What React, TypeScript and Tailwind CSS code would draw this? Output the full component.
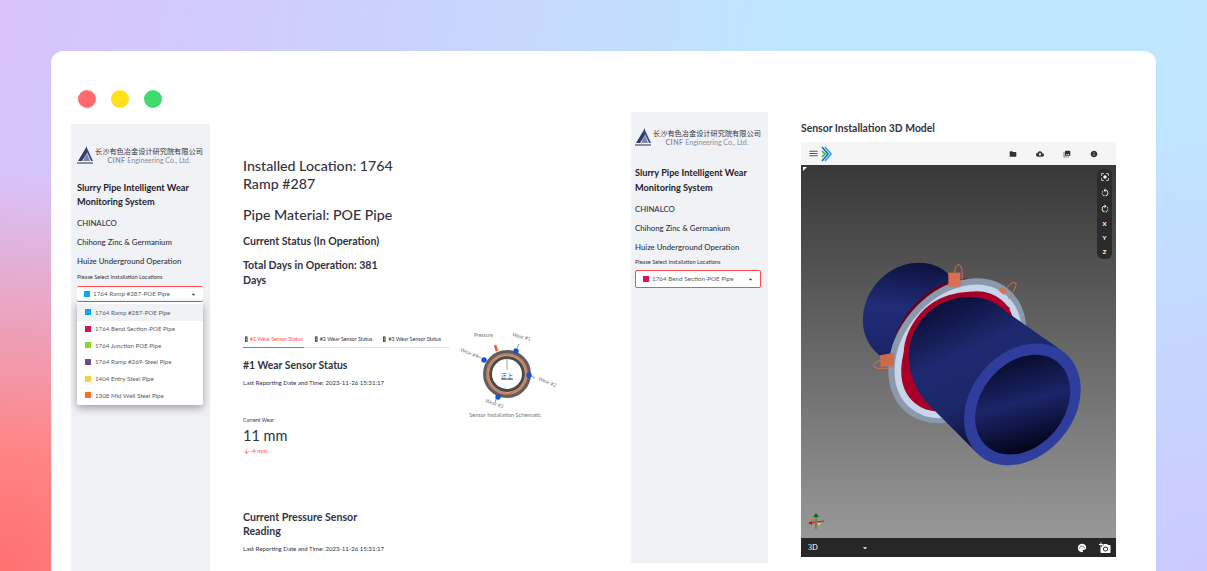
import { MdMenu, MdFolder, MdCloudUpload, MdPhotoLibrary, MdInfo, MdCenterFocusStrong, MdRotateLeft, MdRotateRight, MdPalette, MdArrowDropDown, MdAddAPhoto, MdArrowDownward } from 'react-icons/md';

const pipeOptions = [
  { label: '1764 Ramp #287-POE Pipe', swatch: 'bg-[#0ea5e9]', active: true },
  { label: '1764 Bend Section-POE Pipe', swatch: 'bg-[#d6125a]', active: false },
  { label: '1764 Junction POE Pipe', swatch: 'bg-[#84d82c]', active: false },
  { label: '1764 Ramp #269-Steel Pipe', swatch: 'bg-[#6b4a9c]', active: false },
  { label: '1404 Entry Steel Pipe', swatch: 'bg-[#f9cf45]', active: false },
  { label: '1308 Mid Well Steel Pipe', swatch: 'bg-[#fb6d25]', active: false },
];

function Logo() {
  return (
    <div className="flex items-center gap-px">
      <svg width="17" height="19" viewBox="0 0 17 19" className="shrink-0">
        <path d="M10 0 L1 15 H5 L10 7 Z" fill="#2f3b6c" />
        <path d="M10 7 L13 15 H6 Z" fill="#7c86a8" />
        <path d="M10 2 L16 15 H14 L9 4 Z" fill="#3f4c80" />
        <rect x="0" y="16" width="16" height="2" fill="#8a8fa3" />
      </svg>
      <div className="flex flex-col items-center">
        <span className="font-['Noto_Sans_CJK_SC',sans-serif] text-[7.2px] leading-[9px] text-[#33343c] whitespace-nowrap">长沙有色冶金设计研究院有限公司</span>
        <span className="text-[7px] leading-[8px] text-[#8b8d96] whitespace-nowrap"><b className="font-bold tracking-[0.5px]">CINF</b> Engineering Co., Ltd.</span>
      </div>
    </div>
  );
}

function SelectBox({ label, swatch, frame }: { label: string; swatch: string; frame: string }) {
  return (
    <div className={`flex w-[126px] items-center rounded-[2px] border-[#ff4b4b] bg-white pl-[7px] pr-[5px] ${frame}`}>
      <span className={`mr-[3px] h-[6px] w-[6px] ${swatch}`} />
      <span className="flex-1 truncate text-[6.3px] text-[#5b5d68]">{label}</span>
      <MdArrowDropDown className="h-[9px] w-[9px] text-[#444]" />
    </div>
  );
}

function SensorDiagram() {
  return (
    <svg width="110" height="100" viewBox="0 0 110 100" className="block">
      <circle cx="57" cy="50" r="22" fill="#fff" stroke="#5f5f5f" strokeWidth="4" />
      <circle cx="57" cy="50" r="19.5" fill="none" stroke="#c9825f" strokeWidth="2.6" />
      <circle cx="57" cy="50" r="16.5" fill="none" stroke="#4a4a4a" strokeWidth="3" />
      <path d="M57 30 V46" stroke="#777" strokeWidth="0.7" />
      <text x="57" y="54" textAnchor="middle" fontSize="6" fill="#444" textDecoration="underline" fontFamily="'Noto Sans CJK SC', sans-serif">正上</text>
      <path d="M47 27 L45 21" stroke="#e8622a" strokeWidth="2.5" />
      <circle cx="66" cy="27" r="2.7" fill="#1453d8" />
      <circle cx="79" cy="51" r="2.7" fill="#1453d8" />
      <circle cx="48" cy="73" r="2.7" fill="#1453d8" />
      <circle cx="34" cy="36" r="2.7" fill="#1453d8" />
      <path d="M67 24 L69 20 M81 52 L85 54 M46 75 L45 79 M31 34 L27 32" stroke="#1453d8" strokeWidth="0.6" />
      <g fontSize="5" fill="#777" fontFamily="Lato, sans-serif">
        <text x="24" y="13">Pressure</text>
        <text x="62" y="12" transform="rotate(15 62 12)">Wear #1</text>
        <text x="88" y="56" transform="rotate(22 88 56)">Wear #2</text>
        <text x="35" y="78" transform="rotate(20 35 78)">Wear #3</text>
        <text x="10" y="27" transform="rotate(22 10 27)">Wear #4</text>
      </g>
    </svg>
  );
}

function PipeModel() {
  const bodyEdge = 'M470 186 C420 140 360 130 300 150 C220 175 165 260 178 340 C185 400 215 445 240 468';
  return (
    <svg width="240" height="240" viewBox="0 0 720 720" className="absolute left-[49px] top-[85px]">
      <defs>
        <linearGradient id="body" x1="0.3" y1="0.05" x2="0.72" y2="0.98">
          <stop offset="0" stopColor="#0d1240" />
          <stop offset="0.3" stopColor="#1e2a70" />
          <stop offset="0.6" stopColor="#1c2768" />
          <stop offset="1" stopColor="#05071c" />
        </linearGradient>
        <linearGradient id="backBody" x1="0.1" y1="0.7" x2="0.95" y2="0.2">
          <stop offset="0" stopColor="#1a2569" />
          <stop offset="0.5" stopColor="#202c77" />
          <stop offset="1" stopColor="#0b1038" />
        </linearGradient>
        <linearGradient id="inner" x1="0.15" y1="0.85" x2="0.8" y2="0.15">
          <stop offset="0" stopColor="#03041a" />
          <stop offset="0.55" stopColor="#1b2568" />
          <stop offset="1" stopColor="#0a0e34" />
        </linearGradient>
      </defs>
      <g fill="url(#backBody)">
        <ellipse cx="187" cy="190" rx="160" ry="140" transform="rotate(-50 187 190)" />
        <path d="M110 310 L290 70 L400 200 L240 400 Z" />
      </g>
      <ellipse cx="300" cy="270" rx="205" ry="150" transform="rotate(-50 300 270)" fill="#6a0018" />
      <ellipse cx="322" cy="302" rx="225" ry="165" transform="rotate(-50 322 302)" fill="none" stroke="#8a99ae" strokeWidth="30" />
      <ellipse cx="324" cy="304" rx="212" ry="154" transform="rotate(-50 324 304)" fill="#a80028" stroke="#c7d5e8" strokeWidth="20" />
      <path d={bodyEdge} fill="none" stroke="#a80028" strokeWidth="30" />
      <path d={`${bodyEdge} L381 609 L636 302 Z`} fill="url(#body)" />
      <ellipse cx="517" cy="463" rx="200" ry="155" transform="rotate(-50 517 463)" fill="#2f3d9c" />
      <ellipse cx="518" cy="464" rx="165" ry="125" transform="rotate(-50 518 464)" fill="url(#inner)" />
      <g stroke="#d9704f" strokeWidth="3" fill="none">
        <path d="M315 72 C312 50 322 40 330 46 C340 56 336 90 334 106" />
        <path d="M468 120 C478 100 490 94 498 100 C500 112 484 134 475 146" />
        <path d="M96 330 C78 334 66 342 72 350 C84 360 110 356 130 350" />
      </g>
      <rect x="295" y="68" width="36" height="42" fill="#d9704f" />
      <path d="M445 120 L458 112 L472 124 L460 134 Z" fill="#d9704f" />
      <path d="M90 316 L132 308 L132 346 L92 352 Z" fill="#cc6a4c" />
    </svg>
  );
}

function Gizmo() {
  return (
    <svg width="18" height="18" viewBox="0 0 18 18" className="absolute bottom-[7px] left-[7px]">
      <path d="M8 2 V16" stroke="#6f6f6f" strokeWidth="1.5" />
      <path d="M8 0 L11 4 H5 Z" fill="#0b6a14" />
      <path d="M2 10 L16 8" stroke="#c81818" strokeWidth="1.2" />
      <path d="M0 10 L4 8 V12 Z" fill="#c81818" />
      <path d="M4 6 L11 12" stroke="#8f8a20" strokeWidth="1.2" />
      <path d="M9 10 L13 10 L11 13 Z" fill="#e6dc16" />
    </svg>
  );
}

export default function App() {
  return (
    <div className="h-[571px] w-[1207px] overflow-hidden bg-[radial-gradient(circle_at_0%_100%,#ff6f70_0%,#ff8484_9%,rgba(255,150,170,0)_30%),radial-gradient(circle_at_100%_100%,#cbc9ff_0%,rgba(203,201,255,0)_35%),linear-gradient(100deg,#d8c2fc_0%,#cbd2fd_30%,#bfe6ff_60%,#c0e6ff_100%)] pl-[51px] pt-[51px] font-['Lato','Noto_Sans_CJK_SC',sans-serif] text-[#31333f]">
      <div className="flex h-[560px] w-[1105px] rounded-[12px] bg-white pl-[20px]">
        <div className="w-[560px]">
          <div className="ml-[7px] mt-[39px] flex gap-[15px]">
            <span className="h-[18px] w-[18px] rounded-full bg-[#ff6b6b]" />
            <span className="h-[18px] w-[18px] rounded-full bg-[#ffe01b]" />
            <span className="h-[18px] w-[18px] rounded-full bg-[#3ddc6b]" />
          </div>

          <div className="mt-[16px] flex">
            <aside className="h-[447px] w-[139px] shrink-0 bg-[#f0f2f6] pl-[6px] pt-[22px]">
              <Logo />
              <h2 className="mt-[16px] w-[125px] text-[9.2px] font-bold leading-[14px] text-[#1f2029]">Slurry Pipe Intelligent Wear Monitoring System</h2>
              <p className="mt-[9px] text-[7.8px] font-medium leading-[10px]">CHINALCO</p>
              <p className="mt-[9px] text-[7.8px] font-medium leading-[10px]">Chihong Zinc &amp; Germanium</p>
              <p className="mt-[9px] text-[7.8px] font-medium leading-[10px]">Huize Underground Operation</p>
              <p className="mt-[7px] text-[5.6px] leading-[8px]">Please Select Installation Locations</p>
              <div className="mt-[5px]">
                <SelectBox label="1764 Ramp #287-POE Pipe" swatch="bg-[#0ea5e9]" frame="h-[16px] border-y" />
                <ul className="w-[126px] rounded-b-[2px] bg-white pb-px pt-[2px] shadow-[0_3px_9px_rgba(0,0,0,0.35)]">
                  {pipeOptions.map((opt) => (
                    <li key={opt.label} className={`flex h-[16.6px] items-center pl-[8px] text-[6.2px] text-[#5b5d68] ${opt.active ? 'bg-[#f0f2f6]' : ''}`}>
                      <span className={`mr-[4px] h-[6px] w-[6px] ${opt.swatch}`} />
                      {opt.label}
                    </li>
                  ))}
                </ul>
              </div>
            </aside>

            <main className="w-[421px] pl-[33px]">
              <h1 className="mt-[33px] w-[170px] text-[14.2px] font-medium leading-[18px]">Installed Location: 1764 Ramp #287</h1>
              <h2 className="mt-[13px] text-[14.2px] font-medium leading-[18px]">Pipe Material: POE Pipe</h2>
              <h3 className="mt-[10px] text-[10.6px] font-bold leading-[14px]">Current Status (In Operation)</h3>
              <h3 className="mt-[10px] w-[160px] text-[10.6px] font-bold leading-[15px]">Total Days in Operation: 381 Days</h3>

              <div className="mt-[47px] flex">
                <div className="w-[207px]">
                  <div className="flex gap-[9px] border-b border-[#e6e6e9] text-[5.3px] leading-[8px]">
                    <span className="-mb-px border-b border-[#ff4b4b] pb-[4px] pr-[1px] text-[#ff4b4b]">🚦#1 Wear Sensor Status</span>
                    <span>🚦#2 Wear Sensor Status</span>
                    <span>🚦#3 Wear Sensor Status</span>
                  </div>
                  <h3 className="mt-[10px] text-[10.4px] font-bold leading-[14px]">#1 Wear Sensor Status</h3>
                  <p className="mt-[7px] whitespace-nowrap text-[6.1px] leading-[8px]">Last Reporting Date and Time: 2023-11-26 15:31:17</p>
                  <p className="mt-[30px] text-[5.2px] leading-[7px]">Current Wear</p>
                  <p className="mt-[2px] text-[14.5px] leading-[20px]">11 mm</p>
                  <p className="mt-px flex items-center text-[6px] leading-[8px] text-[#ff4b4b]">
                    <MdArrowDownward className="h-[7px] w-[7px]" />
                    -4 mm
                  </p>
                </div>
                <div className="-mt-[11px] flex w-[110px] flex-col items-center">
                  <SensorDiagram />
                  <p className="-mt-[13px] whitespace-nowrap text-[5.6px] leading-[7px] text-[#74767f]">Sensor Installation Schematic</p>
                </div>
              </div>

              <h3 className="mt-[55px] w-[150px] text-[10.6px] font-bold leading-[14px]">Current Pressure Sensor Reading</h3>
              <p className="mt-[7px] whitespace-nowrap text-[6.1px] leading-[8px]">Last Reporting Date and Time: 2023-11-26 15:31:17</p>
            </main>
          </div>
        </div>

        <aside className="mt-[61px] h-[451px] w-[137px] shrink-0 bg-[#f0f2f6] pl-[4px] pt-[16px]">
          <Logo />
          <h2 className="mt-[18px] w-[125px] text-[9.2px] font-bold leading-[15px] text-[#1f2029]">Slurry Pipe Intelligent Wear Monitoring System</h2>
          <p className="mt-[9px] text-[7.8px] font-medium leading-[10px]">CHINALCO</p>
          <p className="mt-[9px] text-[7.8px] font-medium leading-[10px]">Chihong Zinc &amp; Germanium</p>
          <p className="mt-[9px] text-[7.8px] font-medium leading-[10px]">Huize Underground Operation</p>
          <p className="mt-[6px] text-[5.6px] leading-[8px]">Please Select Installation Locations</p>
          <div className="mt-[4px]">
            <SelectBox label="1764 Bend Section-POE Pipe" swatch="bg-[#d6125a]" frame="h-[18px] border" />
          </div>
        </aside>

        <section className="ml-[33px] mt-[70px] w-[315px]">
          <h2 className="text-[10.4px] font-bold leading-[14px]">Sensor Installation 3D Model</h2>
          <div className="mt-[7px] flex h-[23px] items-center bg-[#f5f5f5] pl-[7px] pr-[18px]">
            <MdMenu className="h-[11px] w-[11px] text-[#555]" />
            <svg width="12" height="16" viewBox="0 0 12 16" className="ml-[2px]">
              <path d="M1 1 L7 8 L1 15" fill="none" stroke="#1769c9" strokeWidth="1.6" />
              <path d="M4 1 L10 8 L4 15" fill="none" stroke="#2aa6d8" strokeWidth="1.6" />
              <path d="M1 5 L4 8 L1 11" fill="none" stroke="#3db53d" strokeWidth="1.6" />
            </svg>
            <div className="ml-auto flex gap-[19px] text-[#333]">
              <MdFolder className="h-[8px] w-[8px]" />
              <MdCloudUpload className="h-[8px] w-[8px]" />
              <MdPhotoLibrary className="h-[8px] w-[8px]" />
              <MdInfo className="h-[8px] w-[8px]" />
            </div>
          </div>
          <div className="relative h-[373px] bg-[linear-gradient(180deg,#383838_0%,#989898_100%)]">
            <span className="absolute left-[2px] top-[2px] h-0 w-0 border-r-[4px] border-t-[4px] border-r-transparent border-t-white" />
            <PipeModel />
            <div className="absolute right-[4px] top-[4px] flex h-[90px] w-[15px] flex-col items-center justify-between rounded-[6px] bg-[#2b2b2b] py-[3px] text-[6px] font-bold leading-[8px] text-white">
              <MdCenterFocusStrong className="h-[10px] w-[10px]" />
              <MdRotateLeft className="h-[10px] w-[10px]" />
              <MdRotateRight className="h-[10px] w-[10px]" />
              <span>X</span>
              <span>Y</span>
              <span>Z</span>
            </div>
            <Gizmo />
          </div>
          <div className="flex h-[19px] items-center bg-[#272727] pl-[7px] pr-[5px] text-white">
            <span className="font-['Liberation_Serif',serif] text-[8px] leading-none">3D</span>
            <MdArrowDropDown className="ml-[42px] h-[10px] w-[10px]" />
            <MdPalette className="ml-auto h-[10px] w-[10px]" />
            <MdAddAPhoto className="ml-[12px] h-[12px] w-[12px]" />
          </div>
        </section>
      </div>
    </div>
  );
}
